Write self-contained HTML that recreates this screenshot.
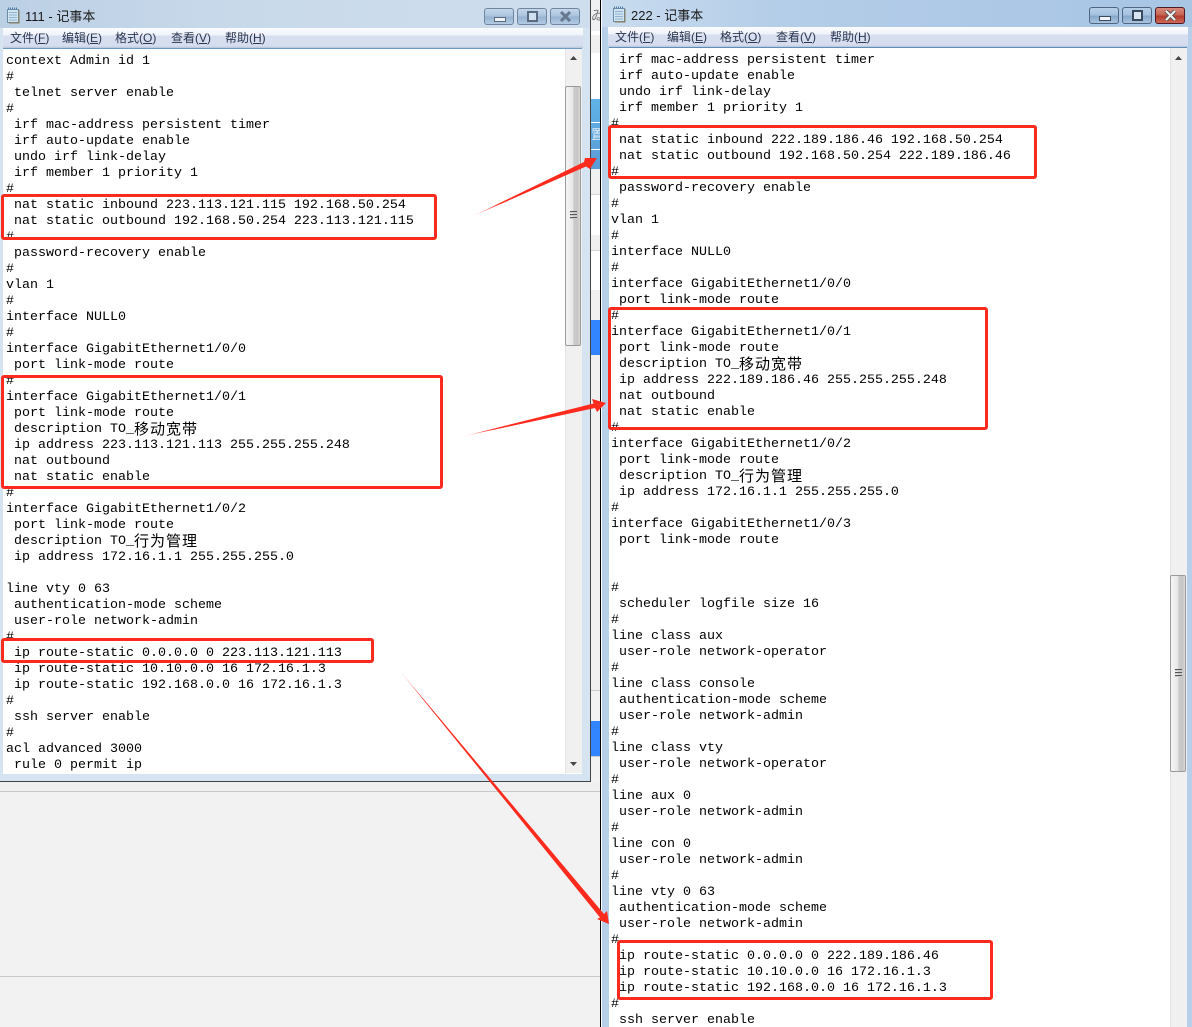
<!DOCTYPE html>
<html><head><meta charset="utf-8"><style>
html,body{margin:0;padding:0;background:#f2f2f2}
#r{position:relative;width:1192px;height:1027px;overflow:hidden;background:#f2f2f2}
#r div,#r pre,#r svg{position:absolute}
pre{margin:0;font:13.333px/16px "Liberation Mono","Noto Sans CJK SC",monospace;color:#000}
pre b{font:400 15px/16px "WenQuanYi Zen Hei","Noto Sans CJK SC",sans-serif;letter-spacing:1px;display:inline-block;height:16px;vertical-align:top;position:relative;top:-1px}
.t{font:13px/16px "Liberation Sans","Noto Sans CJK SC",sans-serif;color:#1a1a1a;white-space:pre}
.m{font:12px/16px "Liberation Sans","Noto Sans CJK SC",sans-serif;color:#2a3550;white-space:pre}
.m u{text-decoration:underline}
.menu{background:linear-gradient(#fbfcfe 0,#f0f3fa 35%,#d7deef 40%,#d6ddef 90%,#b6c4d8 100%)}
.btn{box-sizing:border-box;width:30px;height:17px;border:1px solid #71859f;border-radius:3px;background:linear-gradient(#c4d6ea,#a9c3de 50%,#95b2d0 52%,#b3cbe4)}
.sb{background:#f0f0f0;border-left:1px solid #e4e4e4}
.th{box-sizing:border-box;width:16px;border:1px solid #9a9a9a;border-radius:2px;background:linear-gradient(90deg,#f6f6f6,#e6e6e6 50%,#cbcbcb 55%,#c6c6c6 85%,#dedede)}
.g{left:4px;width:7px;height:1px;background:#555;box-shadow:0 3px #555,0 6px #555,0 1px #ccc,0 4px #ccc,0 7px #ccc}
.box{box-sizing:border-box;border:3px solid #fd2a1e;border-radius:3px}
</style></head><body><div id="r">

<!-- background strip -->
<div style="left:591px;top:0;width:10px;height:31px;background:#eef0f2"></div>
<div class="t" style="left:591px;top:8px;color:#777">ゐ</div>
<div style="left:591px;top:31px;width:9px;height:4px;background:#fff"></div>
<div style="left:591px;top:35px;width:9px;height:18px;background:#f0f0f0"></div>
<div style="left:591px;top:53px;width:9px;height:46px;background:#fff"></div>
<div style="left:591px;top:99px;width:9px;height:70px;background:linear-gradient(#60b3e6,#5a9bd6)"></div>
<div style="left:591px;top:122px;width:9px;height:1px;background:#fff"></div>
<div style="left:591px;top:149px;width:9px;height:1px;background:#fff"></div>
<div class="t" style="left:591px;top:127px;color:#e5eef8">置</div>
<div style="left:591px;top:169px;width:9px;height:25px;background:#f0f0f0;border-bottom:1px solid #d4d4d4"></div>
<div style="left:591px;top:195px;width:9px;height:40px;background:#fff"></div>
<div style="left:591px;top:235px;width:9px;height:15px;background:#f0f0f0;border-bottom:1px solid #d4d4d4"></div>
<div style="left:591px;top:251px;width:9px;height:39px;background:#fff"></div>
<div style="left:591px;top:290px;width:9px;height:30px;background:#f0f0f0"></div>
<div style="left:591px;top:320px;width:9px;height:35px;background:#3385ff"></div>
<div style="left:591px;top:355px;width:9px;height:335px;background:#f0f0f0"></div>
<div style="left:591px;top:690px;width:9px;height:1px;background:#ccc"></div>
<div style="left:591px;top:691px;width:9px;height:30px;background:#f2f2f2"></div>
<div style="left:591px;top:721px;width:9px;height:35px;background:#3385ff"></div>
<div style="left:591px;top:756px;width:9px;height:1px;background:#ccc"></div>
<div style="left:0;top:782px;width:600px;height:9px;background:#f0f0f0"></div>
<div style="left:0;top:791px;width:600px;height:1px;background:#c9c9c9"></div>
<div style="left:0;top:976px;width:600px;height:1px;background:#c9c9c9"></div>

<!-- left window -->
<div style="left:0;top:0;width:590px;height:781px;background:#d6e4f2"></div>
<div style="left:590px;top:0;width:1px;height:782px;background:#444"></div>
<div style="left:0;top:781px;width:591px;height:1px;background:#444"></div>
<div style="left:0;top:0;width:590px;height:28px;background:linear-gradient(90deg,#bcd0e5,#c8d9ea 40%,#cfdeee)"></div>
<svg style="left:6px;top:7px" width="15" height="18" viewBox="0 0 15 18"><rect x="1.5" y="2.5" width="11" height="13" fill="#cfe3f0" stroke="#6f8ea8"/><path d="M3 5.500h8M3 8h8M3 10.500h8M3 13h8" stroke="#8fb4d0"/><path d="M2 1.500h10" stroke="#4d7fa6" stroke-width="2" stroke-dasharray="1 1"/><path d="M13 3v13H3" fill="none" stroke="#8a7d55"/></svg>
<div class="t" style="left:25px;top:9px">111 - 记事本</div>
<div class="btn" style="left:484px;top:8px"><div style="left:9px;top:8px;width:10px;height:3px;border:1px solid #5a6a80;background:#eef3f8"></div></div>
<div class="btn" style="left:517px;top:8px"><div style="left:9px;top:2px;width:7px;height:7px;border:2px solid #5a6a80;background:#cfe0f0"></div></div>
<div class="btn" style="left:550px;top:8px"><svg style="left:8px;top:2px" width="13" height="11" viewBox="0 0 13 11"><path d="M2 1l9 9M11 1l-9 9" stroke="#68788e" stroke-width="3"/></svg></div>
<div class="menu" style="left:3px;top:28px;width:580px;height:20px"></div>
<div class="m" style="left:10px;top:30px">文件(<u>F</u>)</div>
<div class="m" style="left:62px;top:30px">编辑(<u>E</u>)</div>
<div class="m" style="left:115px;top:30px">格式(<u>O</u>)</div>
<div class="m" style="left:171px;top:30px">查看(<u>V</u>)</div>
<div class="m" style="left:225px;top:30px">帮助(<u>H</u>)</div>
<div style="left:3px;top:48px;width:579px;height:726px;background:#fff;border-top:1px solid #6f9cc4;box-sizing:border-box"></div>
<pre style="left:6px;top:54px">context Admin id 1
#
 telnet server enable
#
 irf mac-address persistent timer
 irf auto-update enable
 undo irf link-delay
 irf member 1 priority 1
#
 nat static inbound 223.113.121.115 192.168.50.254
 nat static outbound 192.168.50.254 223.113.121.115
#
 password-recovery enable
#
vlan 1
#
interface NULL0
#
interface GigabitEthernet1/0/0
 port link-mode route
#
interface GigabitEthernet1/0/1
 port link-mode route
 description TO_<b>移动宽带</b>
 ip address 223.113.121.113 255.255.255.248
 nat outbound
 nat static enable
#
interface GigabitEthernet1/0/2
 port link-mode route
 description TO_<b>行为管理</b>
 ip address 172.16.1.1 255.255.255.0

line vty 0 63
 authentication-mode scheme
 user-role network-admin
#
 ip route-static 0.0.0.0 0 223.113.121.113
 ip route-static 10.10.0.0 16 172.16.1.3
 ip route-static 192.168.0.0 16 172.16.1.3
#
 ssh server enable
#
acl advanced 3000
 rule 0 permit ip</pre>
<div class="sb" style="left:565px;top:49px;width:16px;height:724px"></div>
<svg style="left:569px;top:55px" width="9" height="6"><path d="M4.500 1L8 5H1z" fill="#444"/></svg>
<svg style="left:569px;top:761px" width="9" height="6"><path d="M4.500 5L8 1H1z" fill="#444"/></svg>
<div class="th" style="left:565px;top:86px;height:260px"><div class="g" style="top:124px"></div></div>

<!-- right window -->
<div style="left:600px;top:0;width:1px;height:1027px;background:#000"></div>
<div style="left:601px;top:0;width:1px;height:1027px;background:#fff"></div>
<div style="left:602px;top:0;width:590px;height:1027px;background:#b7cfe9"></div>
<div style="left:602px;top:0;width:590px;height:27px;background:linear-gradient(90deg,#c9dcef,#b4cde8 30%,#a9c6e5 90%);"></div>
<svg style="left:612px;top:6px" width="15" height="18" viewBox="0 0 15 18"><rect x="1.500" y="2.500" width="11" height="13" fill="#cfe3f0" stroke="#6f8ea8"/><path d="M3 5.500h8M3 8h8M3 10.500h8M3 13h8" stroke="#8fb4d0"/><path d="M2 1.500h10" stroke="#4d7fa6" stroke-width="2" stroke-dasharray="1 1"/><path d="M13 3v13H3" fill="none" stroke="#8a7d55"/></svg>
<div class="t" style="left:631px;top:8px">222 - 记事本</div>
<div class="btn" style="left:1089px;top:7px;background:linear-gradient(#b6cfe8,#a3c0de 50%,#85a6c8 52%,#a8c4e0);border-color:#51667f"><div style="left:9px;top:8px;width:10px;height:3px;border:1px solid #3a4a5e;background:#f2f5f8"></div></div>
<div class="btn" style="left:1122px;top:7px;background:linear-gradient(#b6cfe8,#a3c0de 50%,#85a6c8 52%,#a8c4e0);border-color:#51667f"><div style="left:9px;top:2px;width:7px;height:7px;border:2px solid #3a4a5e;background:#d8e6f2"></div></div>
<div class="btn" style="left:1155px;top:7px;background:linear-gradient(#d98a7e,#c4604f 50%,#b0382a 52%,#cf6a58);border-color:#4f1a26"><svg style="left:8px;top:2px" width="13" height="11" viewBox="0 0 13 11"><path d="M2 1l9 9M11 1l-9 9" stroke="#555" stroke-width="4"/><path d="M2 1l9 9M11 1l-9 9" stroke="#f2f2f2" stroke-width="2"/></svg></div>
<div class="menu" style="left:608px;top:27px;width:580px;height:20px"></div>
<div class="m" style="left:615px;top:29px">文件(<u>F</u>)</div>
<div class="m" style="left:667px;top:29px">编辑(<u>E</u>)</div>
<div class="m" style="left:720px;top:29px">格式(<u>O</u>)</div>
<div class="m" style="left:776px;top:29px">查看(<u>V</u>)</div>
<div class="m" style="left:830px;top:29px">帮助(<u>H</u>)</div>
<div style="left:609px;top:47px;width:578px;height:980px;background:#fff;border-top:1px solid #5f8fb8;box-sizing:border-box"></div>
<pre style="left:611px;top:53px"> irf mac-address persistent timer
 irf auto-update enable
 undo irf link-delay
 irf member 1 priority 1
#
 nat static inbound 222.189.186.46 192.168.50.254
 nat static outbound 192.168.50.254 222.189.186.46
#
 password-recovery enable
#
vlan 1
#
interface NULL0
#
interface GigabitEthernet1/0/0
 port link-mode route
#
interface GigabitEthernet1/0/1
 port link-mode route
 description TO_<b>移动宽带</b>
 ip address 222.189.186.46 255.255.255.248
 nat outbound
 nat static enable
#
interface GigabitEthernet1/0/2
 port link-mode route
 description TO_<b>行为管理</b>
 ip address 172.16.1.1 255.255.255.0
#
interface GigabitEthernet1/0/3
 port link-mode route


#
 scheduler logfile size 16
#
line class aux
 user-role network-operator
#
line class console
 authentication-mode scheme
 user-role network-admin
#
line class vty
 user-role network-operator
#
line aux 0
 user-role network-admin
#
line con 0
 user-role network-admin
#
line vty 0 63
 authentication-mode scheme
 user-role network-admin
#
 ip route-static 0.0.0.0 0 222.189.186.46
 ip route-static 10.10.0.0 16 172.16.1.3
 ip route-static 192.168.0.0 16 172.16.1.3
#
 ssh server enable</pre>
<div class="sb" style="left:1170px;top:48px;width:16px;height:979px"></div>
<svg style="left:1174px;top:55px" width="9" height="6"><path d="M4.500 1L8 5H1z" fill="#444"/></svg>
<div class="th" style="left:1170px;top:575px;height:197px"><div class="g" style="top:93px"></div></div>

<!-- annotations -->
<div class="box" style="left:1px;top:194px;width:436px;height:46px"></div>
<div class="box" style="left:1px;top:375px;width:442px;height:114px"></div>
<div class="box" style="left:1px;top:638px;width:373px;height:25px"></div>
<div class="box" style="left:608px;top:125px;width:429px;height:54px"></div>
<div class="box" style="left:608px;top:307px;width:380px;height:123px"></div>
<div class="box" style="left:617px;top:940px;width:376px;height:60px"></div>
<svg style="left:0;top:0" width="1192" height="1027" viewBox="0 0 1192 1027">
<defs>
<linearGradient id="a" gradientUnits="userSpaceOnUse" x1="471" y1="217" x2="500" y2="204"><stop offset="0" stop-color="#fd2a1e" stop-opacity="0"/><stop offset="1" stop-color="#fd2a1e"/></linearGradient>
<linearGradient id="b" gradientUnits="userSpaceOnUse" x1="460" y1="437" x2="495" y2="428"><stop offset="0" stop-color="#fd2a1e" stop-opacity="0"/><stop offset="1" stop-color="#fd2a1e"/></linearGradient>
<linearGradient id="c" gradientUnits="userSpaceOnUse" x1="395" y1="665" x2="425" y2="700"><stop offset="0" stop-color="#fd2a1e" stop-opacity="0"/><stop offset="1" stop-color="#fd2a1e"/></linearGradient>
</defs>
<polygon points="471,217 584,162 585,158 597,158 590,169 586,166.500" fill="url(#a)"/>
<polygon points="460,437 593.500,403.500 592,399 606,403 597,412 595,408" fill="url(#b)"/>
<polygon points="395,665 604,914 607,911 609,924 597,919 600,917.500" fill="url(#c)"/>
</svg>
</div></body></html>
